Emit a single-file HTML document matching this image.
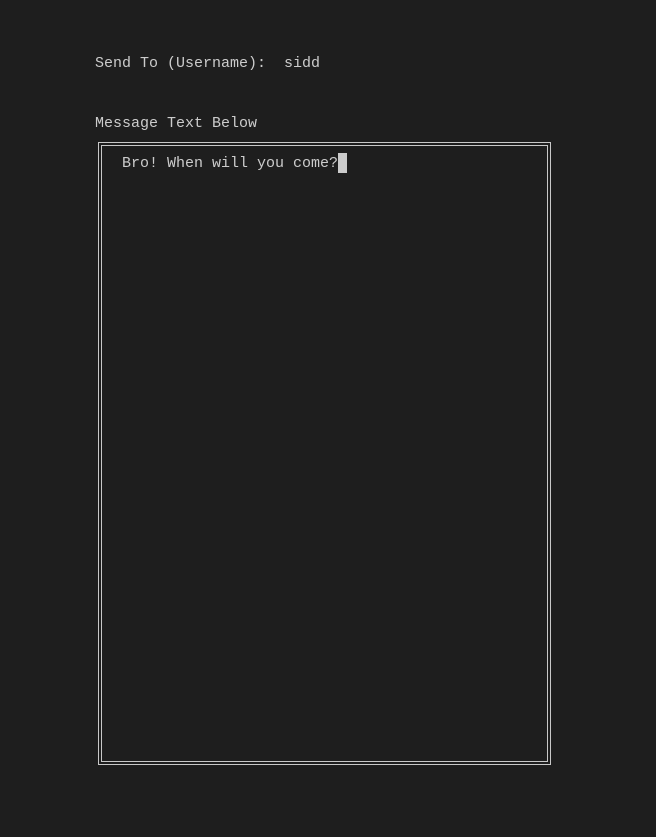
<!DOCTYPE html>
<html><head><style>
html,body{margin:0;background:#1e1e1e;width:656px;height:837px;overflow:hidden}
.t{position:absolute;font-family:"Liberation Mono",monospace;font-size:15px;line-height:20px;color:#cccccc;white-space:pre}
.b{position:absolute;border:1px solid #c8c8c8}
</style></head><body>
<div class="t" style="left:95px;top:54px">Send To (Username):  sidd</div>
<div class="t" style="left:95px;top:114px">Message Text Below</div>
<div class="b" style="left:98px;top:142px;width:451px;height:621px"></div>
<div class="b" style="left:101px;top:145px;width:445px;height:615px"></div>
<div class="t" style="left:122px;top:154px">Bro! When will you come?</div>
<div style="position:absolute;left:338px;top:153px;width:9px;height:20px;background:#cccccc"></div>
</body></html>
